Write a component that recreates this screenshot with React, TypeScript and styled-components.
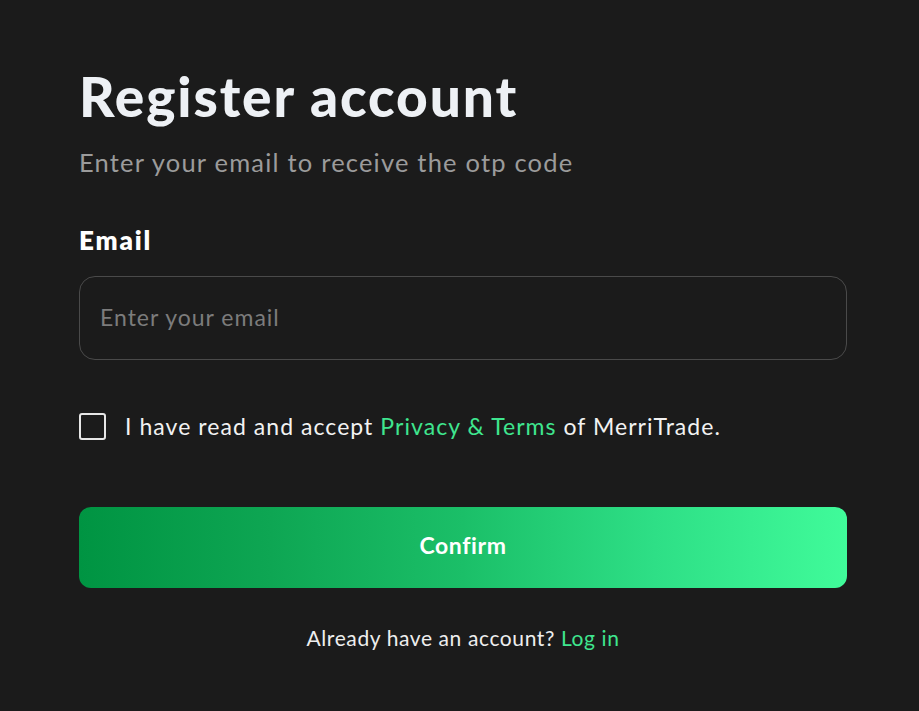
import React from "react";
import styled, { createGlobalStyle } from "styled-components";

const Global = createGlobalStyle`
  html, body { margin: 0; padding: 0; background: #1b1b1b; }
  body { font-family: Lato, "Noto Sans", sans-serif; color: #f2f4f7; }
  * { box-sizing: border-box; }
`;

const Page = styled.main`
  min-height: 711px;
  padding: 64px 72px 0 79px;
  display: flex;
  flex-direction: column;
`;

const Title = styled.h1`
  margin: 0;
  font-size: 55px;
  font-weight: 900;
  line-height: 64px;
  letter-spacing: 1.9px;
  color: #eef1f5;
`;

const Subtitle = styled.p`
  margin: 18px 0 0;
  font-size: 25.5px;
  line-height: 32px;
  letter-spacing: 1.2px;
  color: #9b9b9b;
  font-weight: 400;
`;

const Label = styled.label`
  margin-top: 46px;
  font-size: 26px;
  font-weight: 800;
  line-height: 32px;
  letter-spacing: 1.8px;
  color: #ffffff;
`;

const Input = styled.input`
  margin-top: 20px;
  height: 84px;
  width: 100%;
  background: transparent;
  border: 1px solid #4a4a4a;
  border-radius: 16px;
  padding: 0 20px 2px;
  font-family: inherit;
  font-size: 23px;
  letter-spacing: 1px;
  color: #fff;
  outline: none;
  &::placeholder { color: #7c7c7c; }
`;

const CheckRow = styled.label`
  margin-top: 52px;
  display: flex;
  align-items: center;
  gap: 19px;
  font-size: 23px;
  letter-spacing: 1.05px;
  color: #f2f2f2;
`;

const Box = styled.span`
  width: 27px;
  height: 27px;
  border: 2px solid #e6e6e6;
  border-radius: 3px;
  flex: none;
`;

const Link = styled.a`
  color: #3fe68f;
  text-decoration: none;
`;

const Button = styled.button`
  margin-top: 67px;
  height: 81px;
  width: 100%;
  border: none;
  border-radius: 12px;
  padding: 0 0 6px;
  background: linear-gradient(90deg, #009442 0%, #0ea653 25%, #1bbf68 50%, #2edf86 75%, #40fb9a 100%);
  color: #ffffff;
  font-family: inherit;
  font-size: 23px;
  font-weight: 700;
  letter-spacing: 0.6px;
  cursor: pointer;
`;

const Footer = styled.p`
  margin: 37px 0 0;
  text-align: center;
  font-size: 21px;
  letter-spacing: 0.6px;
  color: #eeeeee;
`;

export default function App() {
  return (
    <>
      <Global />
      <Page>
        <Title>Register account</Title>
        <Subtitle>Enter your email to receive the otp code</Subtitle>
        <Label htmlFor="email">Email</Label>
        <Input id="email" placeholder="Enter your email" />
        <CheckRow>
          <Box />
          <span>
            I have read and accept <Link href="#">Privacy &amp; Terms</Link> of MerriTrade.
          </span>
        </CheckRow>
        <Button>Confirm</Button>
        <Footer>
          Already have an account? <Link href="#">Log in</Link>
        </Footer>
      </Page>
    </>
  );
}
